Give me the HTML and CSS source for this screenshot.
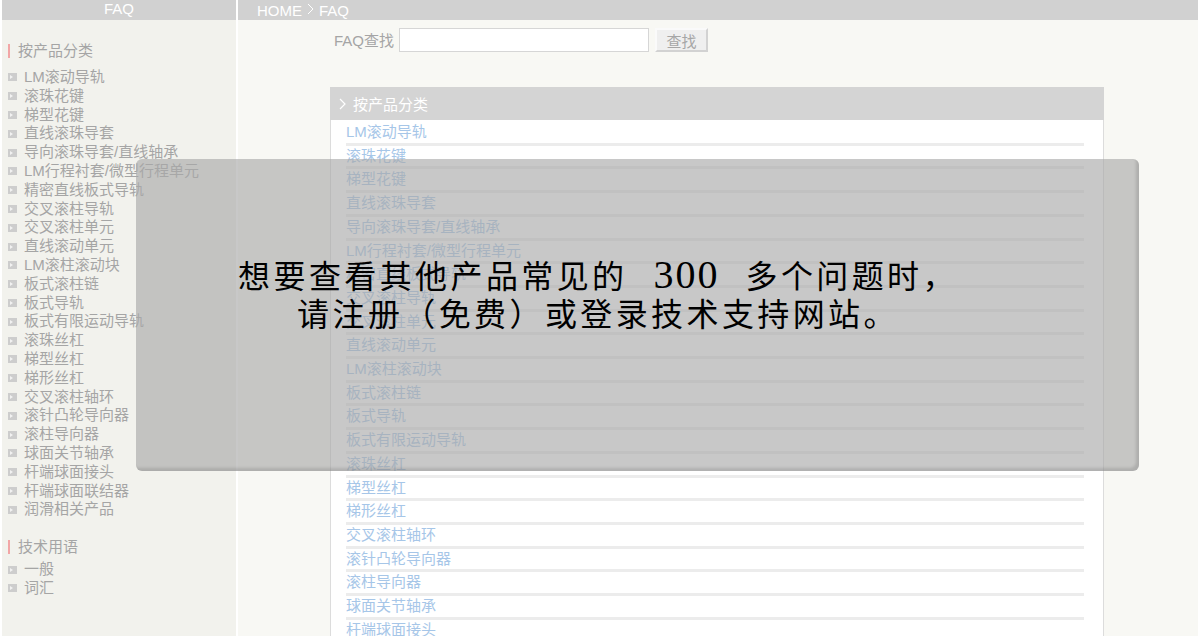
FILE: index.html
```html
<!DOCTYPE html>
<html lang="zh-CN">
<head>
    <meta charset="UTF-8">
    <title>FAQ</title>
    <link rel="stylesheet" href="styles.css">
</head>
<body>
<div class="page">
    <aside class="side">
        <div class="side-title">FAQ</div>
        <div class="side-body">
            <h3 class="side-head">按产品分类</h3>
            <ul class="side-list">
                <li>LM滚动导轨</li>
                <li>滚珠花键</li>
                <li>梯型花键</li>
                <li>直线滚珠导套</li>
                <li>导向滚珠导套/直线轴承</li>
                <li>LM行程衬套/微型行程单元</li>
                <li>精密直线板式导轨</li>
                <li>交叉滚柱导轨</li>
                <li>交叉滚柱单元</li>
                <li>直线滚动单元</li>
                <li>LM滚柱滚动块</li>
                <li>板式滚柱链</li>
                <li>板式导轨</li>
                <li>板式有限运动导轨</li>
                <li>滚珠丝杠</li>
                <li>梯型丝杠</li>
                <li>梯形丝杠</li>
                <li>交叉滚柱轴环</li>
                <li>滚针凸轮导向器</li>
                <li>滚柱导向器</li>
                <li>球面关节轴承</li>
                <li>杆端球面接头</li>
                <li>杆端球面联结器</li>
                <li>润滑相关产品</li>
            </ul>
            <h3 class="side-head terms">技术用语</h3>
            <ul class="side-list">
                <li>一般</li>
                <li>词汇</li>
            </ul>
        </div>
    </aside>

    <main class="main">
        <div class="crumb">
            HOME
            <svg class="chev" width="7" height="12" viewBox="0 0 7 12"><polyline points="1,1 6,6 1,11" fill="none" stroke="#fff" stroke-width="1"/></svg>
            FAQ
        </div>
        <div class="main-body">
            <form class="search">
                <label for="q">FAQ查找</label>
                <input type="text" id="q" name="q">
                <button type="button">查找</button>
            </form>

            <div class="panel">
                <div class="panel-head">
                    <svg class="chev" width="7" height="12" viewBox="0 0 7 12"><polyline points="1,1 6,6 1,11" fill="none" stroke="#fff" stroke-width="1.2"/></svg>
                    按产品分类
                </div>
                <ul class="panel-list">
                    <li><a href="#">LM滚动导轨</a></li>
                    <li><a href="#">滚珠花键</a></li>
                    <li><a href="#">梯型花键</a></li>
                    <li><a href="#">直线滚珠导套</a></li>
                    <li><a href="#">导向滚珠导套/直线轴承</a></li>
                    <li><a href="#">LM行程衬套/微型行程单元</a></li>
                    <li><a href="#">精密直线板式导轨</a></li>
                    <li><a href="#">交叉滚柱导轨</a></li>
                    <li><a href="#">交叉滚柱单元</a></li>
                    <li><a href="#">直线滚动单元</a></li>
                    <li><a href="#">LM滚柱滚动块</a></li>
                    <li><a href="#">板式滚柱链</a></li>
                    <li><a href="#">板式导轨</a></li>
                    <li><a href="#">板式有限运动导轨</a></li>
                    <li><a href="#">滚珠丝杠</a></li>
                    <li><a href="#">梯型丝杠</a></li>
                    <li><a href="#">梯形丝杠</a></li>
                    <li><a href="#">交叉滚柱轴环</a></li>
                    <li><a href="#">滚针凸轮导向器</a></li>
                    <li><a href="#">滚柱导向器</a></li>
                    <li><a href="#">球面关节轴承</a></li>
                    <li><a href="#">杆端球面接头</a></li>
                    <li><a href="#">杆端球面联结器</a></li>
                    <li><a href="#">润滑相关产品</a></li>
                </ul>
            </div>
        </div>
    </main>
</div>

<!-- login notice over the page -->
<div class="notice">
    想要查看其他产品常见的<span class="num"> 300 </span>多个问题时，<br>
    请注册（免费）或登录技术支持网站。
</div>
</body>
</html>
```

FILE: styles.css
```css
/* base */
html, body {
    margin: 0;
    padding: 0;
    overflow: hidden;
}

body {
    font-family: "Liberation Sans", "Noto Sans CJK SC", sans-serif;
    font-size: 15px;
    background-color: #fff;
    color: #a5a5a5;
}

.page {
    display: flex;
    min-height: 100vh;
    padding-left: 2px;
}

/* sidebar */
.side {
    width: 234px;
    margin-right: 2px;
    background-color: #f2f2ed;
}

.side-title {
    height: 20px;
    line-height: 17px;
    background-color: #d1d1d1;
    color: #fff;
    text-align: center;
}

.side-body {
    padding: 21px 0 0 6px;
}

.side-head {
    margin: 0 0 7px 0;
    font-size: 15px;
    font-weight: normal;
    line-height: 20px;
    height: 20px;
    color: #a5a5a5;
    display: flex;
    align-items: center;
}

.side-head::before {
    content: "";
    width: 2px;
    height: 14px;
    background-color: #f2a6a6;
    margin-right: 8px;
}

.side-head.terms {
    margin-bottom: 3px;
}

.side-list {
    list-style: none;
    margin: 0 0 18px 0;
    padding: 0;
}

.side-list li {
    line-height: 18.8px;
    display: flex;
    align-items: center;
    white-space: nowrap;
}

.side-list li::before {
    content: "";
    width: 0;
    height: 0;
    border-style: solid;
    border-width: 2px 2px 2px 3px;
    border-color: #cdcdcd #cdcdcd #cdcdcd #f2f2f2;
    outline: 2px solid #cdcdcd;
    margin: 0 9px 0 2px;
}

/* main */
.main {
    flex: 1;
    background-color: #f8f8f4;
}

.crumb {
    height: 20px;
    line-height: 17px;
    background-color: #d1d1d1;
    color: #fff;
    padding-left: 19px;
    display: flex;
    align-items: center;
    gap: 5px;
}

.crumb .chev {
    margin-top: -2px;
}

.main-body {
    padding: 8px 0 0 92px;
}

.search {
    display: flex;
    align-items: center;
    padding-left: 4px;
    margin: 0 0 35px 0;
}

.search label {
    color: #a5a5a5;
    margin-right: 5px;
    margin-top: -2px;
}

.search input {
    width: 246px;
    height: 20px;
    padding: 1px;
    border: 1px solid #d6d6d6;
    background: #fff;
    margin: 0;
}

.search button {
    margin-left: 6px;
    width: 53px;
    height: 24px;
    padding: 2px 0 0 0;
    font-family: "Liberation Sans", "Noto Sans CJK SC", sans-serif;
    font-size: 15px;
    color: #a6a6a6;
    background-color: #efefef;
    border: 2px solid;
    border-color: #fafafa #d2d2d2 #d2d2d2 #fafafa;
    line-height: 20px;
}

/* panel */
.panel {
    width: 774px;
}

.panel-head {
    height: 33px;
    background-color: #d4d4d4;
    color: #fff;
    display: flex;
    align-items: center;
    gap: 7px;
    padding-left: 9px;
}

.panel-list {
    list-style: none;
    margin: 0;
    padding: 2px 19px 0 15px;
    background-color: #fff;
    border-left: 1px solid #dcdcdc;
    border-right: 1px solid #dcdcdc;
}

.panel-list li {
    line-height: 20.7px;
    border-bottom: 3px solid #ececec;
}

.panel-list a {
    color: #a6c6e8;
    text-decoration: none;
}

/* overlay notice */
.notice {
    position: absolute;
    left: 136px;
    top: 159px;
    width: 924px;
    height: 216px;
    padding: 96px 79px 0 0;
    border-radius: 6px;
    background-color: rgba(168, 168, 168, 0.63);
    box-shadow: inset -3px -3px 3px rgba(0, 0, 0, 0.12);
    font-family: "Liberation Serif", "Noto Sans CJK SC", serif;
    font-size: 32px;
    letter-spacing: 3.4px;
    line-height: 38px;
    color: #000;
    text-align: center;
}

.notice .num {
    font-size: 40px;
    line-height: 1;
    letter-spacing: 2px;
    word-spacing: 14px;
}
```
